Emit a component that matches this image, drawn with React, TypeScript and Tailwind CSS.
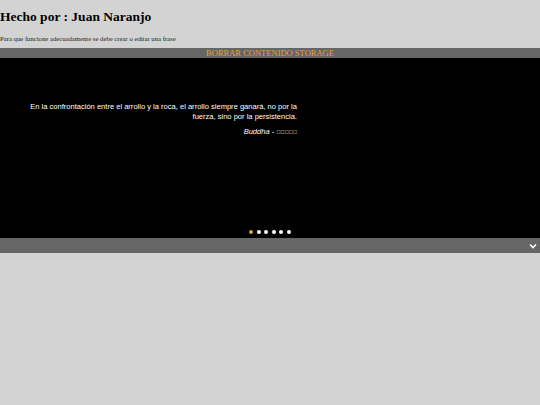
export default function App() {
  const dots = [0, 1, 2, 3, 4, 5];
  return (
    <div className="min-h-[405px] bg-[#d3d3d3]" style={{ fontFamily: '"Liberation Serif", serif' }}>
      <h3 className="pt-[8px] text-[13.5px] font-bold leading-[17px] text-black">Hecho por : Juan Naranjo</h3>
      <p className="mt-[9px] text-[6.7px] leading-[9px] text-[#222]">
        Para que funcione adecuadamente se debe crear o editar una frase
      </p>
      <div className="mt-[5px] flex h-[10px] items-center justify-center bg-[#666666]">
        <button className="text-[8.5px] leading-[10px] text-[#e6a035]">BORRAR CONTENIDO STORAGE</button>
      </div>
      <div className="flex h-[180px] flex-col bg-black" style={{ fontFamily: '"Liberation Sans", sans-serif' }}>
        <div className="ml-[28px] w-[269px] pt-[44px] text-right text-[7.55px] leading-[9.5px] text-white">
          <p>
            En la confrontación entre el arrollo y la roca, el arrollo siempre ganará, no por la fuerza, sino por la
            persistencia.
          </p>
          <p className="mt-[6px]">
            <em>Buddha</em> - <span className="text-[5.5px]">{'\uE000\uE001\uE002\uE003\uE004'}</span>
          </p>
        </div>
        <div className="mt-auto flex justify-center gap-[3.5px] pb-[4px]">
          {dots.map((d) => (
            <span
              key={d}
              className={`h-[4px] w-[4px] rounded-full ${d === 0 ? 'bg-[#e6a035]' : 'bg-white'}`}
            />
          ))}
        </div>
      </div>
      <div className="flex h-[15px] items-center justify-end bg-[#666666] pr-[3px]">
        <svg width="8" height="6" viewBox="0 0 8 6" className="text-white">
          <path d="M1 1.5 L4 4.5 L7 1.5" fill="none" stroke="currentColor" strokeWidth="1.6" />
        </svg>
      </div>
    </div>
  );
}
